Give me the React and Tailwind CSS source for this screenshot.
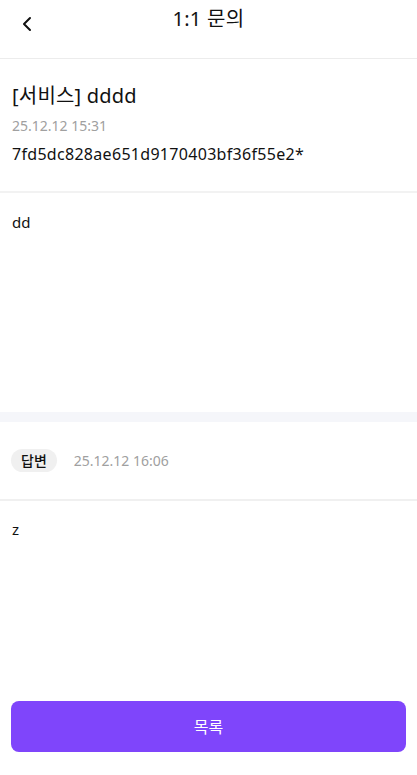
import { ChevronLeft } from 'lucide-react';

export default function App() {
    return (
        <div
            className="w-[417px] h-[775px] bg-white flex flex-col text-[#111111]"
            style={{ fontFamily: '"Noto Sans", "Noto Sans CJK KR", sans-serif' }}
        >
            {/* Header */}
            <header className="relative h-[59px] flex items-center justify-center border-b border-[#ececec] shrink-0">
                <button className="absolute left-[11px] top-[8px] p-1 text-[#111111]">
                    <ChevronLeft className="w-[24px] h-[24px]" strokeWidth={2} />
                </button>
                <h1 className="text-[20px] leading-none tracking-[0.3px] -mt-[20px]">1:1 문의</h1>
            </header>

            {/* Question */}
            <section className="px-[12px] pt-[23px] pb-[26px] border-b-2 border-[#f2f2f2]">
                <h2 className="text-[20px] leading-[28px] tracking-[0.2px]">[서비스] dddd</h2>
                <p className="mt-[6px] text-[14px] leading-[20px] text-[#a0a0a0]">25.12.12 15:31</p>
                <p className="mt-[7px] text-[16px] leading-[22px] tracking-[0.3px]">7fd5dc828ae651d9170403bf36f55e2*</p>
            </section>

            <div className="h-[219px] px-[12px] pt-[18px] text-[15px] leading-[22px]">dd</div>

            <div className="h-[10px] bg-[#f5f6fa]" />

            {/* Answer */}
            <section className="h-[79px] px-[11px] flex items-center gap-[17px] border-b-2 border-[#f0f0f0]">
                <span className="h-[23px] px-[10px] rounded-full bg-[#f0f0f0] text-[14px] leading-[23px] font-medium">답변</span>
                <span className="text-[14px] text-[#a0a0a0]">25.12.12 16:06</span>
            </section>

            <div className="flex-1 px-[12px] pt-[17px] text-[15px] leading-[22px]">z</div>

            <div className="px-[11px] pb-[23px]">
                <button className="w-full h-[51px] rounded-[8px] bg-[#7f45fb] text-white text-[16px]">목록</button>
            </div>
        </div>
    );
}
